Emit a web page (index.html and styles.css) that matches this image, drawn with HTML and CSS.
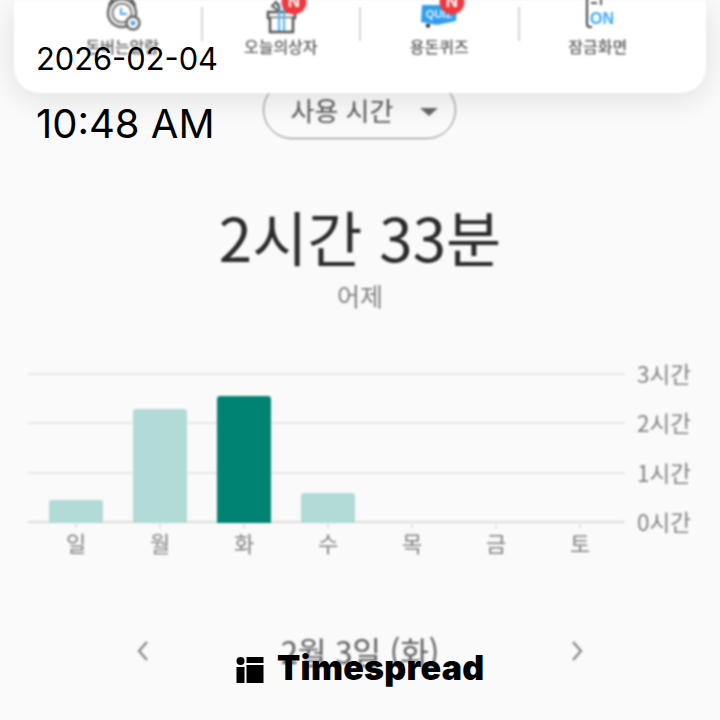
FILE: index.html
```html
<!DOCTYPE html>
<html lang="ko">
<head>
  <meta charset="UTF-8">
  <meta name="viewport" content="width=device-width, initial-scale=1.0">
  <title>사용 시간</title>
  <link rel="stylesheet" href="styles.css">
</head>
<body>
  <div class="app">
    <div class="top-card">
      <div class="menu-item">
        <svg class="menu-icon" viewBox="0 0 60 36">
          <path d="M17 6 L21 -1 M43 6 L39 -1" stroke="#555" stroke-width="3" fill="none"/>
          <circle cx="30" cy="13" r="14" fill="#fff" stroke="#666" stroke-width="2.5"/>
          <circle cx="30" cy="13" r="9.5" fill="#fff" stroke="#777" stroke-width="2"/>
          <path d="M29 8 V14 H35" stroke="#4aa8f0" stroke-width="2" fill="none"/>
          <circle cx="41" cy="23" r="6.5" fill="#fff" stroke="#666" stroke-width="2.5"/>
          <circle cx="41" cy="23" r="2.5" fill="#4aa8f0"/>
        </svg>
        <span class="menu-label">돈버는알람</span>
      </div>
      <div class="menu-item">
        <svg class="menu-icon" viewBox="0 0 60 36">
          <path d="M17 12 H44 V18 H17 Z" fill="#fff" stroke="#555" stroke-width="2.5"/>
          <path d="M19 18 V32 H42 V18" fill="#fff" stroke="#555" stroke-width="2.5"/>
          <path d="M28 3 V31 M33 3 V31" stroke="#5ab4f2" stroke-width="2.2"/>
          <path d="M28 11 L21 6 L25 2 L29 9" fill="none" stroke="#555" stroke-width="2"/>
          <circle cx="43" cy="2" r="12.5" fill="#ee3a3f"/>
          <text class="badge-text" x="43" y="7">N</text>
        </svg>
        <span class="menu-label">오늘의상자</span>
      </div>
      <div class="menu-item">
        <svg class="menu-icon" viewBox="0 0 60 36">
          <path d="M13 5 H48 L47 21 L28 25 L12 22 Z" fill="#2f9fec"/>
          <rect x="17" y="24" width="4" height="3.5" fill="#333"/>
          <text class="quiz-text" x="30" y="18">QUIZ</text>
          <circle cx="43" cy="2" r="12.5" fill="#ee3a3f"/>
          <text class="badge-text" x="43" y="7">N</text>
        </svg>
        <span class="menu-label">용돈퀴즈</span>
      </div>
      <div class="menu-item">
        <svg class="menu-icon" viewBox="0 0 60 36">
          <path d="M19 -2 V24 Q19 27 22 27 H24" fill="none" stroke="#444" stroke-width="2"/>
          <path d="M23 3 H29 M33 -1 V5" fill="none" stroke="#555" stroke-width="2"/>
          <text class="on-text" x="34" y="24">ON</text>
        </svg>
        <span class="menu-label">잠금화면</span>
      </div>
    </div>

    <div class="filter-row">
      <div class="filter-pill">
        <span>사용 시간</span>
        <i class="caret"></i>
      </div>
    </div>

    <div class="total">2시간 33분</div>
    <div class="total-sub">어제</div>

    <div class="chart">
      <div class="plot">
        <div class="grid-lines">
          <div class="grid-row"><i class="line"></i><span>3시간</span></div>
          <div class="grid-row"><i class="line"></i><span>2시간</span></div>
          <div class="grid-row"><i class="line"></i><span>1시간</span></div>
          <div class="grid-row"><i class="line base"></i><span>0시간</span></div>
        </div>
        <div class="bars">
          <div class="bar" style="height: 23px"></div>
          <div class="bar" style="height: 114px"></div>
          <div class="bar active" style="height: 127px"></div>
          <div class="bar" style="height: 30px"></div>
          <div class="bar" style="height: 0"></div>
          <div class="bar" style="height: 0"></div>
          <div class="bar" style="height: 0"></div>
        </div>
      </div>
      <div class="days">
        <span>일</span><span>월</span><span>화</span><span>수</span><span>목</span><span>금</span><span>토</span>
      </div>
    </div>

    <div class="date-nav">
      <svg class="chevron" viewBox="0 0 14 22"><path d="M11 2 L3 11 L11 20"/></svg>
      <span class="date-text">2월 3일 (화)</span>
      <svg class="chevron" viewBox="0 0 14 22"><path d="M3 2 L11 11 L3 20"/></svg>
    </div>
  </div>

  <!-- overlays on top of the screenshot -->
  <div class="stamp">
    <div class="stamp-date">2026-02-04</div>
    <div class="stamp-time">10:48 AM</div>
  </div>

  <div class="brand">
    <svg class="brand-mark" viewBox="0 0 28 28">
      <circle cx="4.5" cy="5" r="4"/>
      <rect x="0.5" y="11" width="8" height="16"/>
      <rect x="10.5" y="1" width="17" height="6"/>
      <rect x="10.5" y="9" width="17" height="18"/>
    </svg>
    <span class="brand-name">Timespread</span>
  </div>
</body>
</html>
```

FILE: styles.css
```css
html, body {
  margin: 0;
  padding: 0;
}

body {
  width: 720px;
  height: 720px;
  overflow: hidden;
  background-color: #fafafa;
  font-family: "Noto Sans CJK KR", "Noto Sans", sans-serif;
}

.app {
  height: 720px;
  display: flex;
  flex-direction: column;
  filter: blur(0.8px);
}

/* top card */
.top-card {
  position: relative;
  z-index: 2;
  height: 93px;
  margin: 0 14px;
  padding: 0 29px;
  display: grid;
  grid-template-columns: repeat(4, 1fr);
  background-color: #fff;
  border-radius: 0 0 26px 26px;
  box-shadow: 0 6px 30px rgba(0, 0, 0, 0.11);
}

.menu-item {
  position: relative;
  height: 60px;
  display: flex;
  flex-direction: column;
  align-items: center;
}

.menu-item + .menu-item::before {
  content: "";
  position: absolute;
  left: -1px;
  top: 7px;
  width: 2px;
  height: 34px;
  background-color: #d6d6d6;
}

.menu-icon {
  width: 60px;
  height: 36px;
  flex-shrink: 0;
  overflow: visible;
}

.menu-label {
  margin-top: -1px;
  font-size: 16px;
  line-height: 22px;
  font-weight: 500;
  color: #5e5e5e;
  white-space: nowrap;
}

.badge-text {
  font: 700 17px "Liberation Sans", sans-serif;
  fill: #fff;
  text-anchor: middle;
}

.quiz-text {
  font: 700 11px "Liberation Sans", sans-serif;
  fill: #e4f3fd;
  text-anchor: middle;
}

.on-text {
  font: 700 16px "Liberation Sans", sans-serif;
  fill: #41a9f2;
  text-anchor: middle;
}

/* usage filter */
.filter-row {
  display: flex;
  justify-content: center;
  margin-top: -12px;
}

.filter-pill {
  width: 193px;
  height: 58px;
  margin-left: -2px;
  box-sizing: border-box;
  padding: 0 17px 0 27px;
  display: flex;
  align-items: center;
  justify-content: space-between;
  border: 1.5px solid #7e7e7e;
  border-radius: 29px;
  font-size: 26px;
  color: #555;
}

.filter-pill span {
  margin-top: -2px;
}

.caret {
  width: 0;
  height: 0;
  margin-top: 3px;
  border-left: 9px solid transparent;
  border-right: 9px solid transparent;
  border-top: 8px solid #666;
}

/* totals */
.total {
  margin-top: 55px;
  text-align: center;
  font-size: 60px;
  line-height: 84px;
  color: #2b2b2b;
}

.total-sub {
  margin-top: -1px;
  text-align: center;
  font-size: 25px;
  line-height: 36px;
  color: #808080;
}

/* chart */
.chart {
  margin-top: 60px;
  padding-left: 28px;
}

.plot {
  display: grid;
  height: 150px;
}

.grid-lines,
.bars {
  grid-area: 1 / 1;
}

.grid-lines {
  display: flex;
  flex-direction: column;
  justify-content: space-between;
}

.grid-row {
  height: 2px;
  display: flex;
  align-items: center;
}

.grid-row span {
  width: 55px;
  margin-left: 12px;
  margin-bottom: 2px;
  font-size: 22.5px;
  line-height: 2px;
  color: #828282;
  white-space: nowrap;
}

.line {
  flex: 0 0 597px;
  height: 2px;
  background-color: #e8e8e8;
}

.line.base {
  background-color: #dedede;
}

.bars {
  width: 597px;
  padding-left: 21px;
  display: flex;
  align-items: flex-end;
  gap: 30px;
}

.bar {
  width: 54px;
  background-color: #b2dad6;
  border-radius: 3px 3px 0 0;
}

.bar.active {
  background-color: #008373;
}

.days {
  width: 597px;
  padding-left: 21px;
  display: flex;
  gap: 30px;
  margin-top: 1px;
}

.days span {
  width: 54px;
  text-align: center;
  font-size: 22px;
  line-height: 28px;
  color: #828282;
}

.days span::before {
  content: "";
  display: block;
  width: 2px;
  height: 4px;
  margin: 0 auto;
  background-color: #e0e0e0;
}

/* date navigation */
.date-nav {
  margin-top: 75px;
  padding: 0 136px;
  display: flex;
  align-items: center;
  justify-content: space-between;
}

.date-text {
  font-size: 31px;
  line-height: 40px;
  color: #5e5e5e;
}

.chevron {
  width: 14px;
  height: 22px;
  fill: none;
  stroke: #848484;
  stroke-width: 2.2;
}

/* date stamp */
.stamp {
  position: absolute;
  left: 36px;
  top: 36px;
  font-family: "Inter", sans-serif;
  color: #000;
}

.stamp-date {
  font-size: 30.8px;
  line-height: 46px;
}

.stamp-time {
  margin-top: 19px;
  font-size: 40px;
  line-height: 46px;
}

/* brand mark */
.brand {
  position: absolute;
  left: 236px;
  top: 650px;
  display: flex;
  align-items: center;
  gap: 13px;
  color: #000;
}

.brand-mark {
  width: 28px;
  height: 28px;
  margin-top: 4px;
  fill: #000;
}

.brand-name {
  font-family: "Inter", sans-serif;
  font-size: 34px;
  line-height: 36px;
  font-weight: 900;
  letter-spacing: 0.25px;
}
```
